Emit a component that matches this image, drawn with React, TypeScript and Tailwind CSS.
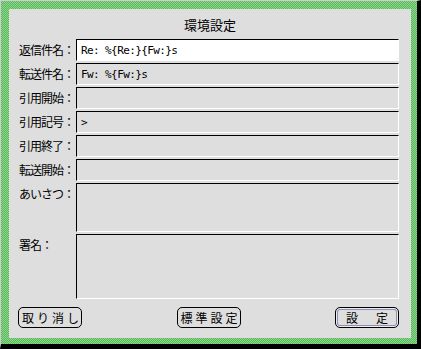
const fields = [
  { label: "返信件名：", value: "Re: %{Re:}{Fw:}s", h: "h-[22px]", active: true },
  { label: "転送件名：", value: "Fw: %{Fw:}s", h: "h-[22px]" },
  { label: "引用開始：", value: "", h: "h-[22px]" },
  { label: "引用記号：", value: ">", h: "h-[22px]" },
  { label: "引用終了：", value: "", h: "h-[22px]" },
  { label: "転送開始：", value: "", h: "h-[22px]" },
  { label: "あいさつ：", value: "", h: "h-[49px]" },
  { label: "署名：", value: "", h: "h-[65px]" },
];

const jp = "font-['Noto_Sans_CJK_JP','Noto_Sans_CJK_SC',sans-serif]";

function Field({ label, value, h, active }: { label: string; value: string; h: string; active?: boolean }) {
  return (
    <div className="flex">
      <div className={`w-[57px] h-[22px] flex items-center text-[12px] tracking-[-1px] text-black leading-none ${jp}`}>
        {label}
      </div>
      <div
        className={`flex-1 ${h} border-t border-l border-black border-r border-b border-r-white border-b-white ${
          active ? "bg-white" : "bg-[#dedede]"
        } pl-[4px] pt-[5px] text-[11px] leading-[12px] text-black font-['DejaVu_Sans_Mono',monospace] tracking-[-0.6px]`}
      >
        {value}
      </div>
    </div>
  );
}

const btn = `w-[64px] h-[21px] rounded-[5px] border border-black bg-[#dedede] text-[12px] tracking-[3px] pl-[3px] leading-none whitespace-nowrap text-black ${jp}`;

export default function App() {
  return (
    <div className="w-[421px] h-[349px] border-t border-l border-[#cfcfcf] border-r-[4px] border-b-[5px] border-r-black border-b-black">
      <div className="w-full h-full pl-[8px] pt-[8px] pr-[6px] pb-[6px] bg-[repeating-conic-gradient(#2fd82f_0_25%,#b8b8b8_0_50%)] bg-[length:2px_2px]">
        <div className="w-full h-full bg-[#dedede] flex flex-col">
          <div className={`h-[30px] pt-[2px] flex items-center justify-center text-[13px] text-black ${jp}`}>
            環境設定
          </div>
          <div className="flex flex-col gap-[2px] pl-[10px] pr-[12px]">
            {fields.map((f, i) => (
              <Field key={i} {...f} />
            ))}
          </div>
          <div className="flex justify-between pl-[9px] pr-[12px] mt-[8px]">
            <button className={btn}>取り消し</button>
            <button className={btn}>標準設定</button>
            <button className={`${btn} shadow-[inset_0_0_0_1px_#ececec,inset_0_0_0_2px_#8e8eb4]`}>設　定</button>
          </div>
        </div>
      </div>
    </div>
  );
}
